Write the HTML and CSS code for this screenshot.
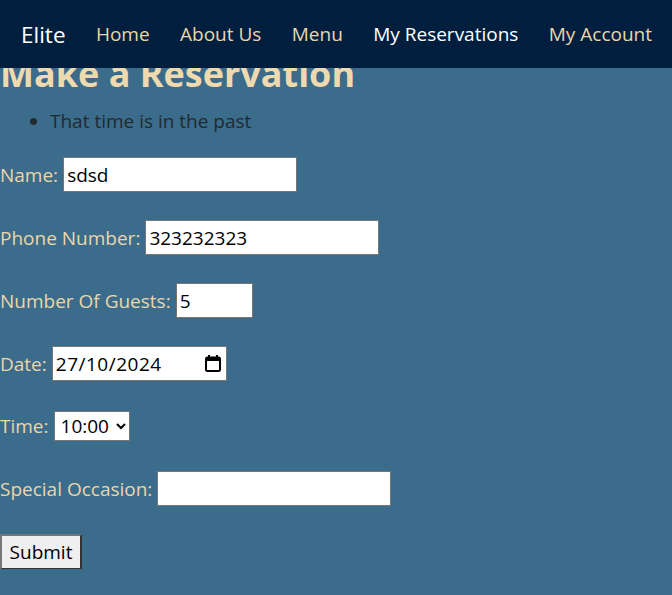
FILE: index.html
```html
<!DOCTYPE html>
<html lang="en-GB">
<head>
<meta charset="utf-8">
<title>Make a Reservation</title>
<link rel="stylesheet" href="styles.css">
</head>
<body>
<nav class="navbar">
  <a class="brand" href="#">Elite</a>
  <a class="nav-link" href="#">Home</a>
  <a class="nav-link" href="#">About Us</a>
  <a class="nav-link" href="#">Menu</a>
  <a class="nav-link active" href="#">My Reservations</a>
  <a class="nav-link" href="#">My Account</a>
</nav>
<main class="content">
  <h1 class="title">Make a Reservation</h1>
  <ul class="errors">
    <li>That time is in the past</li>
  </ul>
  <form class="form">
    <div class="row">
      <label class="label" for="name">Name:</label>
      <input class="field field-wide" id="name" type="text" value="sdsd">
    </div>
    <div class="row">
      <label class="label" for="phone">Phone Number:</label>
      <input class="field field-wide" id="phone" type="text" value="323232323">
    </div>
    <div class="row">
      <label class="label" for="guests">Number Of Guests:</label>
      <input class="field field-small" id="guests" type="text" value="5">
    </div>
    <div class="row">
      <label class="label" for="date">Date:</label>
      <div class="date-field">
        <input class="date-text" id="date" type="text" value="27/10/2024">
        <svg class="cal-icon" width="16" height="17" viewBox="0 0 16 17" aria-hidden="true">
          <rect x="3" y="0" width="2" height="3" fill="#000"/>
          <rect x="11" y="0" width="2" height="3" fill="#000"/>
          <rect x="1" y="2.5" width="14" height="13.5" rx="1.5" fill="none" stroke="#000" stroke-width="2"/>
          <rect x="1" y="2.5" width="14" height="3.5" fill="#000"/>
        </svg>
      </div>
    </div>
    <div class="row row-time">
      <label class="label" for="time">Time:</label>
      <select class="select" id="time">
        <option>10:00</option>
      </select>
    </div>
    <div class="row">
      <label class="label" for="occasion">Special Occasion:</label>
      <input class="field field-wide" id="occasion" type="text" value="">
    </div>
    <div class="row">
      <button class="submit" type="button">Submit</button>
    </div>
  </form>
</main>
</body>
</html>
```

FILE: styles.css
```css
* { box-sizing: border-box; }

body {
  margin: 0;
  background: #3b6c8b;
  font-family: "Open Sans", "Noto Sans", sans-serif;
  color: #ead6aa;
}

.navbar {
  position: fixed;
  top: 0;
  left: 0;
  right: 0;
  height: 68px;
  background: #001f3f;
  display: flex;
  align-items: center;
  gap: 30.4px;
  padding-left: 21px;
  z-index: 10;
}

.brand {
  color: #ffffff;
  font-size: 22.5px;
  text-decoration: none;
}

.nav-link {
  color: #ead6aa;
  font-size: 19px;
  text-decoration: none;
}

.nav-link.active { color: #ffffff; }

.content {
  padding-top: 52px;
}

.title {
  margin: 0;
  font-size: 36px;
  line-height: 44px;
  font-weight: 700;
  color: #efd9ae;
}

.errors {
  margin: 12px 0 0;
  padding-left: 50px;
  font-size: 19px;
  line-height: 27px;
  color: #222a30;
}

.form {
  margin-top: 22px;
  display: flex;
  flex-direction: column;
  gap: 28px;
}

.row {
  display: flex;
  align-items: center;
  gap: 5px;
  height: 35px;
  font-size: 19px;
}

.row-time { margin-top: -1px; }

.label { color: #ead6aa; }

.field {
  height: 35px;
  border: 1px solid #767676;
  background: #fff;
  color: #000;
  font-family: inherit;
  font-size: 19px;
  padding: 0 3px;
}

.field-wide { width: 234px; }
.field-small { width: 77px; }

.date-field {
  display: flex;
  align-items: center;
  justify-content: space-between;
  width: 175px;
  height: 35px;
  border: 1px solid #767676;
  background: #fff;
  padding: 0 5px 0 3px;
}

.date-text {
  width: 140px;
  border: 0;
  padding: 0;
  outline: none;
  font-family: inherit;
  font-size: 19px;
  letter-spacing: 0.5px;
  color: #000;
  background: transparent;
}

.cal-icon { display: block; flex: none; }

.select {
  height: 30px;
  width: 76px;
  border: 1px solid #767676;
  background: #fff;
  color: #000;
  font-family: inherit;
  font-size: 19px;
  padding-left: 2px;
}

.submit {
  height: 36px;
  width: 82px;
  font-family: inherit;
  font-size: 19px;
  background: #efefef;
  color: #000;
  border: 2px solid #333;
  border-top-color: #767676;
  border-left-color: #767676;
  padding: 0 6px;
}
```
